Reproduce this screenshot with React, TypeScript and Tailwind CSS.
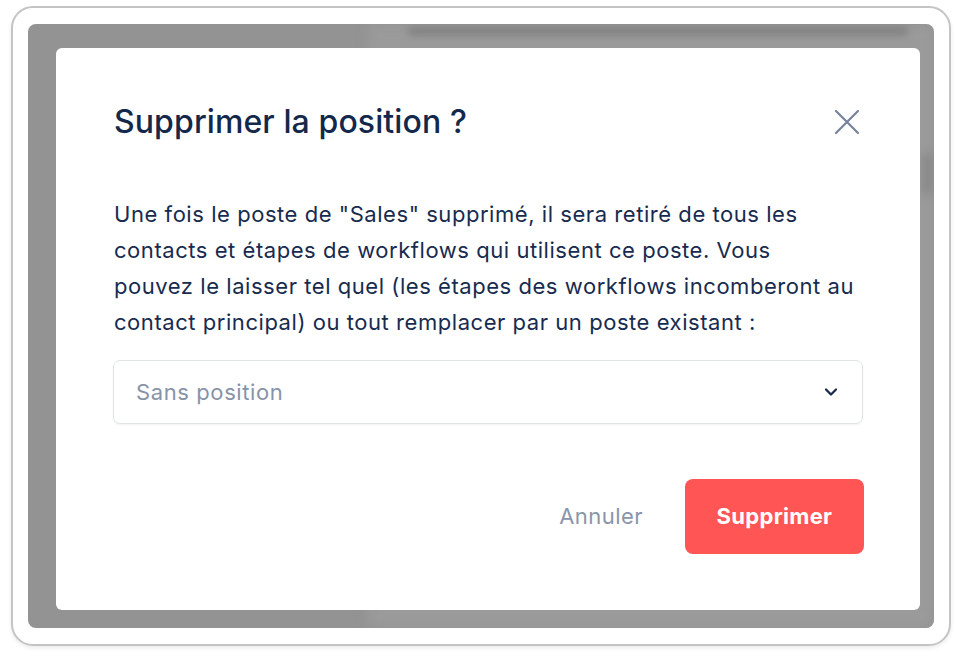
import React from 'react';

const App: React.FC = () => {
  return (
    <div className="w-[962px] h-[660px] bg-white font-['Inter',sans-serif] pt-[6px] pl-[11px]">
      {/* Window frame */}
      <div className="w-[940px] h-[640px] rounded-[22px] border-2 border-[#c4c4c4] bg-white shadow-[0_2px_4px_rgba(0,0,0,0.08)] pt-[16px] pl-[15px]">
        {/* Dimmed backdrop */}
        <div className="relative w-[906px] h-[604px] rounded-[8px] bg-[#939393] overflow-hidden pt-[24px] pl-[28px]">
          <div className="absolute top-0 left-[340px] right-0 bottom-0 bg-[#9a9a9a] blur-[6px]" />
          <div className="absolute top-[2px] left-[380px] w-[500px] h-[10px] rounded bg-[#858585] blur-[3px]" />
          <div className="absolute top-[130px] right-0 w-[12px] h-[40px] bg-[#8a8a8a] blur-[4px]" />

          {/* Modal */}
          <div className="relative w-[864px] h-[562px] rounded-[6px] bg-white pt-[57px] pl-[58px] pr-[56px]">
            <div className="flex items-center justify-between h-[34px]">
              <h2 className="text-[32px] leading-[34px] font-medium text-[#14284b] tracking-[0.1px]">
                Supprimer la position ?
              </h2>
              <svg width="26" height="26" viewBox="0 0 26 26" className="mr-[4px]">
                <path d="M2 2L24 24M24 2L2 24" stroke="#76839a" strokeWidth="2.2" strokeLinecap="round" />
              </svg>
            </div>

            <p className="mt-[57px] text-[22px] leading-[36px] text-[#172b4f] tracking-[0.55px] w-[770px] whitespace-nowrap">
              Une fois le poste de "Sales" supprimé, il sera retiré de tous les
              <br />
              contacts et étapes de workflows qui utilisent ce poste. Vous
              <br />
              pouvez le laisser tel quel (les étapes des workflows incomberont au
              <br />
              contact principal) ou tout remplacer par un poste existant :
            </p>

            <div className="mt-[20px] w-[750px] h-[64px] -ml-[1px] rounded-[7px] border border-[#dfe3e9] shadow-[0_1px_2px_rgba(20,40,75,0.06)] flex items-center justify-between pl-[22px] pr-[24px]">
              <span className="text-[22px] tracking-[0.6px] text-[#8793a8]">Sans position</span>
              <svg width="14" height="10" viewBox="0 0 14 10">
                <path d="M2 2.5L7 7.5L12 2.5" stroke="#14284b" strokeWidth="2.2" fill="none" strokeLinecap="round" strokeLinejoin="round" />
              </svg>
            </div>

            <div className="mt-[55px] w-[750px] flex items-center justify-end gap-[42px]">
              <button className="text-[22px] tracking-[0.45px] text-[#8a95ab]">Annuler</button>
              <button className="w-[179px] h-[75px] rounded-[8px] bg-[#ff5555] text-white text-[22px] tracking-[0.3px] font-bold">
                Supprimer
              </button>
            </div>
          </div>
        </div>
      </div>
    </div>
  );
};

export default App;
